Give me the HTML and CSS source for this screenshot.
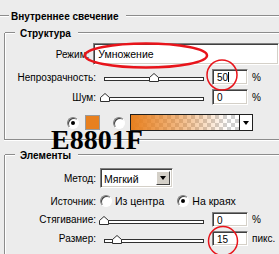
FILE: index.html
```html
<!DOCTYPE html>
<html lang="ru">
<head>
    <meta charset="UTF-8">
    <meta name="viewport" content="width=device-width, initial-scale=1.0">
    <title>Внутреннее свечение</title>
    <link rel="stylesheet" href="styles.css">
</head>
<body>
    <div class="panel">
        <div class="title main-title"><span>Внутреннее свечение</span></div>

        <div class="group structure">
            <div class="title"><span>Структура</span></div>

            <div class="row mode-row">
                <span class="label">Режим:</span>
                <div class="field wide">Умножение</div>
            </div>

            <div class="row">
                <span class="label">Непрозрачность:</span>
                <div class="slider">
                    <span class="track"></span>
                    <svg class="thumb" style="left: 49px" width="10" height="9" viewBox="0 0 10 9"><path d="M0.5 8.5V4.5L5 0.5L9.5 4.5V8.5Z" fill="#fff" stroke="#303030"/></svg>
                </div>
                <div class="field num">50<span class="caret"></span></div>
                <span class="unit">%</span>
            </div>

            <div class="row">
                <span class="label">Шум:</span>
                <div class="slider">
                    <span class="track"></span>
                    <svg class="thumb" style="left: 0px" width="10" height="9" viewBox="0 0 10 9"><path d="M0.5 8.5V4.5L5 0.5L9.5 4.5V8.5Z" fill="#fff" stroke="#303030"/></svg>
                </div>
                <div class="field num">0</div>
                <span class="unit">%</span>
            </div>

            <div class="color-row">
                <span class="radio checked"></span>
                <span class="swatch"></span>
                <span class="radio"></span>
                <div class="gradient-picker">
                    <span class="gradient"></span>
                    <span class="picker-btn"><span class="arrow"></span></span>
                </div>
            </div>

            <div class="hex">E8801F</div>
        </div>

        <div class="group elements">
            <div class="title"><span>Элементы</span></div>

            <div class="row method-row">
                <span class="label">Метод:</span>
                <div class="select">
                    <span class="select-text">Мягкий</span>
                    <span class="select-btn"><span class="arrow"></span></span>
                </div>
            </div>

            <div class="row source-row">
                <span class="label">Источник:</span>
                <span class="radio"></span>
                <span class="radio-text">Из центра</span>
                <span class="radio checked"></span>
                <span class="radio-text">На краях</span>
            </div>

            <div class="row small-row">
                <span class="label">Стягивание:</span>
                <div class="slider">
                    <span class="track"></span>
                    <svg class="thumb" style="left: -1px" width="10" height="9" viewBox="0 0 10 9"><path d="M0.5 8.5V4.5L5 0.5L9.5 4.5V8.5Z" fill="#fff" stroke="#303030"/></svg>
                </div>
                <div class="field num">0</div>
                <span class="unit">%</span>
            </div>

            <div class="row small-row">
                <span class="label">Размер:</span>
                <div class="slider">
                    <span class="track"></span>
                    <svg class="thumb" style="left: 12px" width="10" height="9" viewBox="0 0 10 9"><path d="M0.5 8.5V4.5L5 0.5L9.5 4.5V8.5Z" fill="#fff" stroke="#303030"/></svg>
                </div>
                <div class="field num">15</div>
                <span class="unit">пикс.</span>
            </div>
        </div>

        <!-- red marks drawn over the dialog -->
        <svg class="marks" width="279" height="254" viewBox="0 0 279 254">
            <ellipse cx="146" cy="55.5" rx="61" ry="12" fill="none" stroke="#e8141b" stroke-width="2.5"/>
            <circle cx="222" cy="75" r="15" fill="none" stroke="#e8141b" stroke-width="1.5"/>
            <circle cx="223" cy="241" r="14.5" fill="none" stroke="#e8141b" stroke-width="1.5"/>
        </svg>
    </div>
</body>
</html>
```

FILE: styles.css
```css
body {
    margin: 0;
    background-color: #ececec;
    font-family: "Liberation Sans", Arial, sans-serif;
    font-size: 10px;
    color: #000;
    overflow: hidden;
}

.panel {
    position: relative;
    width: 279px;
    height: 254px;
    padding-top: 10px;
    box-sizing: border-box;
}

/* group titles with etched lines */
.title {
    display: flex;
    align-items: center;
    height: 12px;
    font-weight: bold;
    white-space: nowrap;
}

.title::before,
.title::after {
    content: "";
    border-top: 1px solid #8c8c8c;
    border-bottom: 1px solid #fff;
}

.title::before {
    width: 10px;
}

.title::after {
    flex: 1;
}

.title span {
    padding: 0 7px 0 5px;
}

.main-title::before {
    width: 9px;
}

.main-title span {
    padding: 0 7px 0 2px;
}

.group {
    display: flow-root;
    position: relative;
    margin-left: 4px;
    border-left: 1px solid #8c8c8c;
    border-bottom: 1px solid #8c8c8c;
    box-shadow: inset 1px 0 #fff, 0 1px #fff;
}

.group > .title {
    margin-top: -6px;
}

.structure {
    margin-top: 11px;
    padding-bottom: 8px;
}

.elements {
    margin-top: 15px;
    height: 110px;
}

.row {
    display: flex;
    align-items: center;
    height: 16px;
    margin-top: 4px;
}

.label {
    width: 91px;
    margin-right: 4px;
    text-align: right;
    white-space: nowrap;
}

/* sunken fields */
.field {
    box-sizing: border-box;
    background: #fff;
    border: 1px solid;
    border-color: #808080 #fff #fff #808080;
    box-shadow: inset 1px 1px #404040, inset -1px -1px #d4d0c8;
    white-space: nowrap;
}

.mode-row {
    height: 22px;
}

.wide {
    width: 200px;
    height: 22px;
    padding: 4px 0 0 4px;
    font-size: 10.5px;
}

.num {
    width: 36px;
    height: 16px;
    margin-left: 8px;
    padding: 2px 0 0 4px;
    line-height: 11px;
}

.caret {
    display: inline-block;
    width: 1px;
    height: 10px;
    background: #000;
    vertical-align: -1px;
}

.unit {
    margin-left: 4px;
}

/* sliders */
.slider {
    position: relative;
    width: 104px;
    height: 16px;
}

.track {
    position: absolute;
    left: 4px;
    right: 0;
    top: 8px;
    height: 2px;
    background: #fff;
    border: 1px solid #303030;
}

.thumb {
    position: absolute;
    top: 4px;
}

/* color row */
.color-row {
    display: flex;
    align-items: center;
    height: 17px;
    margin-top: 9px;
    padding-left: 62px;
}

.radio {
    position: relative;
    box-sizing: border-box;
    width: 12px;
    height: 12px;
    border-radius: 50%;
    background: #fff;
    border: 1px solid;
    border-color: #808080 #fff #fff #808080;
    box-shadow: inset 1px 1px #404040;
    flex: none;
}

.radio.checked::after {
    content: "";
    position: absolute;
    left: 3px;
    top: 3px;
    width: 4px;
    height: 4px;
    border-radius: 50%;
    background: #000;
}

.swatch {
    box-sizing: border-box;
    width: 15px;
    height: 15px;
    margin: 0 13px 0 6px;
    background: #e8801f;
    border: 1px solid #9a9a9a;
}

.gradient-picker {
    display: flex;
    box-sizing: border-box;
    width: 123px;
    height: 17px;
    margin-left: 5px;
    border: 1px solid #202020;
    background: #fff;
}

.gradient {
    flex: 1;
    border-right: 1px solid #202020;
    background:
        linear-gradient(to right, #e8801f, rgba(232, 128, 31, 0.55) 45%, rgba(232, 128, 31, 0) 90%),
        conic-gradient(#d0d0d0 25%, #fff 0 50%, #d0d0d0 0 75%, #fff 0) 0 0 / 8px 8px;
}

.picker-btn {
    display: flex;
    align-items: center;
    justify-content: center;
    width: 12px;
}

.arrow {
    border-left: 3px solid transparent;
    border-right: 3px solid transparent;
    border-top: 4px solid #000;
}

.hex {
    position: absolute;
    left: 46px;
    top: 98px;
    font-family: "Liberation Serif", "Times New Roman", serif;
    font-weight: bold;
    font-size: 28px;
    line-height: 18px;
}

/* elements group */
.method-row {
    height: 20px;
    margin-top: 7px;
}

.select {
    display: flex;
    box-sizing: border-box;
    width: 73px;
    height: 20px;
    background: #fff;
    border: 1px solid;
    border-color: #808080 #fff #fff #808080;
    box-shadow: inset 1px 1px #404040, inset -1px -1px #d4d0c8;
    padding: 2px;
}

.select-text {
    flex: 1;
    padding: 2px 0 0 1px;
    font-size: 10.5px;
}

.select-btn {
    display: flex;
    align-items: center;
    justify-content: center;
    width: 12px;
    background: #d4d0c8;
    border: 1px solid;
    border-color: #fff #404040 #404040 #fff;
}

.source-row {
    height: 14px;
    margin-top: 6px;
}

.radio-text {
    margin: 0 13px 0 3px;
    font-size: 10.5px;
}

.small-row {
    height: 15px;
    margin-top: 4px;
}

.small-row .num {
    height: 15px;
}

.marks {
    position: absolute;
    left: 0;
    top: 0;
    pointer-events: none;
}
```
